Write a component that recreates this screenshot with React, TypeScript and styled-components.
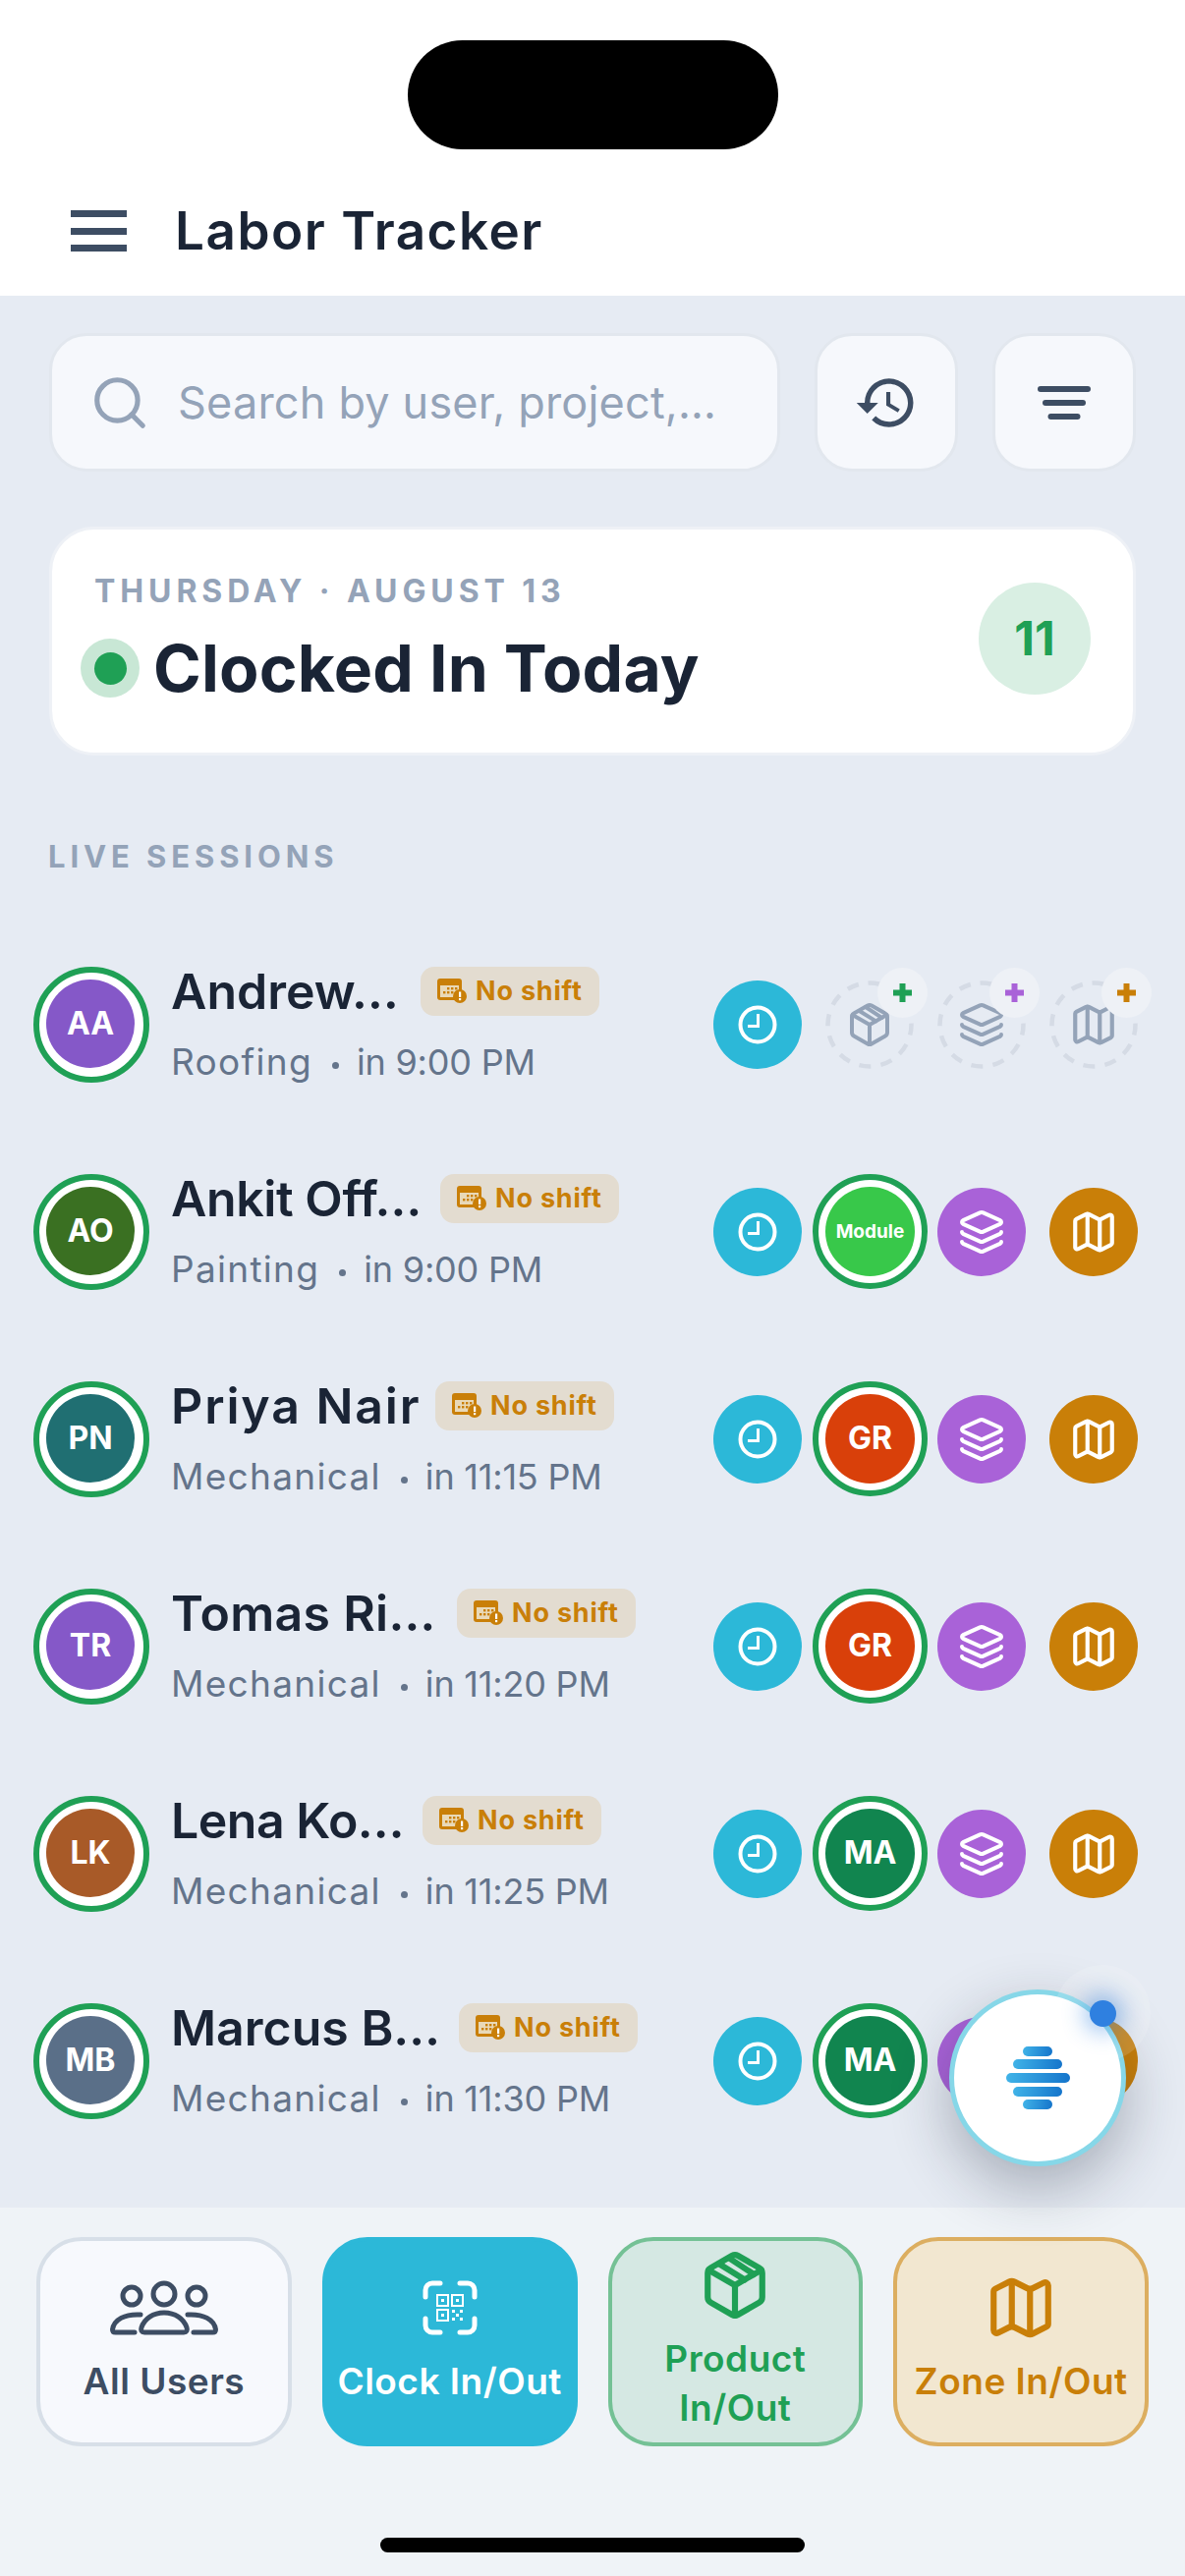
import React from "react";
import styled, { createGlobalStyle } from "styled-components";
import { Search, Layers, Map as MapIcon } from "lucide-react";
import { MdHistory } from "react-icons/md";

const F = `"Inter", "Liberation Sans", sans-serif`;
const GREEN = "#1fa055";
const TEAL = "#2cb8d8";
const PURPLE = "#a962d8";
const AMBER = "#c97f08";
const SLATE = "#3d4d63";
const INK = "#1a2435";

const Global = createGlobalStyle`
  * { box-sizing: border-box; }
  html, body { margin: 0; padding: 0; background: #e6ebf3; font-family: ${F}; }
`;

const Page = styled.div`
  position: relative;
  width: 1206px;
  height: 2622px;
  display: flex;
  flex-direction: column;
  overflow: hidden;
  background: #e6ebf3;
`;

const Header = styled.header`
  height: 301px;
  background: #fff;
  padding-top: 41px;
  display: flex;
  flex-direction: column;
`;

const Notch = styled.div`
  width: 377px;
  height: 111px;
  margin: 0 auto;
  background: #000;
  border-radius: 56px;
`;

const TitleBar = styled.div`
  display: flex;
  align-items: center;
  gap: 49px;
  padding: 56px 0 0 72px;
`;

const Burger = styled.div`
  width: 57px;
  height: 42px;
  display: flex;
  flex-direction: column;
  justify-content: space-between;
  span {
    display: block;
    height: 7px;
    background: ${SLATE};
  }
`;

const AppTitle = styled.h1`
  margin: 0;
  font: 600 53px/54px ${F};
  letter-spacing: 1.5px;
  color: ${INK};
`;

const Main = styled.main`
  flex: 1;
  padding-top: 38px;
  min-height: 0;
`;

const Toolbar = styled.div`
  display: flex;
  gap: 35px;
  padding: 0 50px;
`;

const SearchBox = styled.div`
  flex: 1;
  min-width: 0;
  height: 141px;
  display: flex;
  align-items: center;
  gap: 28px;
  padding-left: 38px;
  background: #f6f8fc;
  border: 3px solid #e2e7ee;
  border-radius: 38px;
  color: #94a3b8;
`;

const SearchInput = styled.input`
  flex: 1;
  min-width: 0;
  border: 0;
  padding: 0;
  outline: 0;
  background: transparent;
  font: 400 45px/56px ${F};
  letter-spacing: 0.2px;
  color: #94a3b8;
  &::placeholder {
    color: #94a3b8;
    opacity: 1;
  }
`;

const ToolButton = styled.button`
  flex: none;
  width: 146px;
  height: 141px;
  padding: 0;
  display: flex;
  align-items: center;
  justify-content: center;
  background: #f6f8fc;
  border: 3px solid #e2e7ee;
  border-radius: 38px;
  color: ${SLATE};
`;

const SummaryCard = styled.section`
  margin: 56px 50px 0;
  height: 233px;
  padding: 43px 43px 0;
  display: flex;
  justify-content: space-between;
  background: #fff;
  border: 3px solid #eef1f6;
  border-radius: 46px;
`;

const DateLine = styled.div`
  font: 700 32px/40px ${F};
  letter-spacing: 4.9px;
  color: #94a3b8;
`;

const SummaryTitle = styled.div`
  display: flex;
  align-items: center;
  gap: 14px;
  margin: 20px 0 0 -14px;
`;

const LiveDot = styled.span`
  width: 60px;
  height: 60px;
  display: flex;
  align-items: center;
  justify-content: center;
  border-radius: 50%;
  background: #c8e7d5;
  &::after {
    content: "";
    width: 33px;
    height: 33px;
    border-radius: 50%;
    background: ${GREEN};
  }
`;

const SummaryHeading = styled.h2`
  margin: 0;
  font: 700 66px/76px ${F};
  letter-spacing: 0.2px;
  color: ${INK};
`;

const CountBubble = styled.div`
  width: 114px;
  height: 114px;
  margin: 11px 0 0;
  display: flex;
  align-items: center;
  justify-content: center;
  border-radius: 50%;
  background: #d9efe3;
  font: 700 48px/1 ${F};
  color: ${GREEN};
`;

const SectionLabel = styled.div`
  margin: 83px 0 45px 49px;
  font: 700 31px/40px ${F};
  letter-spacing: 4.9px;
  color: #94a3b8;
`;

const Row = styled.div`
  height: 211px;
  display: flex;
  align-items: center;
  padding: 0 48px 0 34px;
`;

const AvatarRing = styled.div`
  flex: none;
  width: 118px;
  height: 118px;
  padding: 7px;
  border: 6px solid ${GREEN};
  border-radius: 50%;
  background: #fff;
  margin-right: 22px;
`;

const Avatar = styled.div<{ $bg: string }>`
  width: 90px;
  height: 90px;
  display: flex;
  align-items: center;
  justify-content: center;
  border-radius: 50%;
  background: ${(p) => p.$bg};
  font: 700 32px/1 ${F};
  color: #fff;
`;

const Info = styled.div`
  flex: 1;
  min-width: 0;
  padding-bottom: 4px;
`;

const NameLine = styled.div`
  display: flex;
  align-items: center;
  gap: 20px;
`;

const Name = styled.div<{ $w: number; $ls?: number }>`
  width: ${(p) => p.$w}px;
  font: 600 50px/62px ${F};
  letter-spacing: ${(p) => p.$ls ?? 0}px;
  color: ${INK};
  white-space: nowrap;
`;

const ShiftBadge = styled.div`
  height: 50px;
  display: flex;
  align-items: center;
  gap: 9px;
  padding: 0 17px;
  background: #e3dcd0;
  border-radius: 14px;
  font: 700 27px/1 ${F};
  letter-spacing: 0.8px;
  color: ${AMBER};
  white-space: nowrap;
`;

const SubLine = styled.div`
  display: flex;
  align-items: center;
  margin-top: 18px;
  font: 400 36px/46px ${F};
  letter-spacing: -0.2px;
  color: #64748b;
  white-space: nowrap;
`;

const Trade = styled.span`
  font-size: 37px;
  letter-spacing: 1.3px;
`;

const Sep = styled.span`
  width: 7px;
  height: 7px;
  margin: 8px 18px 0 20px;
  border-radius: 50%;
  background: #64748b;
`;

const Actions = styled.div`
  flex: none;
  display: flex;
  gap: 24px;
`;

const Action = styled.div<{ $bg?: string }>`
  position: relative;
  width: 90px;
  height: 90px;
  display: flex;
  align-items: center;
  justify-content: center;
  border-radius: 50%;
  background: ${(p) => p.$bg ?? "transparent"};
  color: #fff;
`;

const EmptyAction = styled(Action)`
  color: #94a3b8;
`;

const DashRing = styled.svg`
  position: absolute;
  inset: 0;
`;

const PlusBadge = styled.span<{ $c: string }>`
  position: absolute;
  top: -13px;
  right: -14px;
  width: 51px;
  height: 51px;
  display: flex;
  align-items: center;
  justify-content: center;
  border-radius: 50%;
  background: #eef1f6;
  color: ${(p) => p.$c};
`;

const SelectedRing = styled.div<{ $bg: string; $small?: boolean }>`
  position: absolute;
  top: -14px;
  left: -13px;
  width: 117px;
  height: 117px;
  padding: 7px;
  display: flex;
  border: 6px solid ${GREEN};
  border-radius: 50%;
  background: #fff;
  span {
    flex: 1;
    display: flex;
    align-items: center;
    justify-content: center;
    border-radius: 50%;
    background: ${(p) => p.$bg};
    color: #fff;
    font: 700 ${(p) => (p.$small ? "19px" : "32px")}/1 ${F};
  }
`;

const Bottom = styled.footer`
  height: 375px;
  padding: 30px 37px 0;
  background: #eff3f7;
  display: flex;
  flex-direction: column;
`;

const Tabs = styled.div`
  display: grid;
  grid-template-columns: repeat(4, 1fr);
  gap: 31px;
`;

const Tab = styled.button<{ $bg: string; $border: string; $fg: string }>`
  height: 213px;
  padding: 0;
  display: flex;
  flex-direction: column;
  align-items: center;
  justify-content: center;
  gap: 20px;
  background: ${(p) => p.$bg};
  border: 4px solid ${(p) => p.$border};
  border-radius: 46px;
  color: ${(p) => p.$fg};
  font: 600 37px/50px ${F};
  letter-spacing: 0.5px;
  text-align: center;
  white-space: nowrap;
`;

const TwoLineTab = styled(Tab)`
  padding-top: 5px;
`;

const TabIcon = styled.span`
  height: 60px;
  display: flex;
  align-items: center;
  justify-content: center;
`;

const HomeBar = styled.div`
  width: 432px;
  height: 15px;
  margin: 93px auto 0;
  border-radius: 8px;
  background: #000;
`;

const Fab = styled.div`
  position: absolute;
  left: 966px;
  top: 2025px;
  width: 180px;
  height: 180px;
  display: flex;
  flex-direction: column;
  align-items: center;
  justify-content: center;
  gap: 3.7px;
  border-radius: 50%;
  background: #fff;
  border: 5px solid #86d7e8;
  box-shadow: 0 22px 60px rgba(30, 41, 59, 0.32);
`;

const FabBar = styled.span<{ $w: number }>`
  width: ${(p) => p.$w}px;
  height: 10px;
  border-radius: 5px;
  background: linear-gradient(100deg, #41b4e8, #1474cb);
`;

const Halo = styled.div`
  position: absolute;
  left: 1073px;
  top: 2000px;
  width: 98px;
  height: 98px;
  display: flex;
  align-items: center;
  justify-content: center;
  border-radius: 50%;
  background: rgba(255, 255, 255, 0.14);
`;

const Pulse = styled.span`
  width: 27px;
  height: 27px;
  border-radius: 50%;
  background: #2f80e0;
  box-shadow: 0 0 22px 6px rgba(47, 128, 224, 0.45);
`;

const ClockGlyph = () => (
  <svg width="40" height="40" viewBox="0 0 40 40" fill="none" stroke="currentColor">
    <circle cx="20" cy="20" r="17.5" strokeWidth="4" />
    <path d="M20.500 9v12.500H10" strokeWidth="3" />
  </svg>
);

const BoxGlyph = ({ size }: { size: number }) => (
  <svg width={size} height={size} viewBox="0 0 24 24" fill="none" stroke="currentColor" strokeWidth="2" strokeLinecap="round" strokeLinejoin="round">
    <path d="M11 21.730a2 2 0 0 0 2 0l7-4A2 2 0 0 0 21 16V8a2 2 0 0 0-1-1.730l-7-4a2 2 0 0 0-2 0l-7 4A2 2 0 0 0 3 8v8a2 2 0 0 0 1 1.730z" />
    <path d="M12 22V12" />
    <path d="M3.290 7 12 12l8.710-5" />
    <path d="M6.800 5 15.200 10.200" />
    <path d="M10 3 18.200 8.400" />
  </svg>
);

const PlusGlyph = () => (
  <svg width="19" height="19" viewBox="0 0 19 19" fill="currentColor">
    <rect x="6.500" y="0" width="6" height="19" />
    <rect x="0" y="6.500" width="19" height="6" />
  </svg>
);

const FilterGlyph = () => (
  <svg width="54" height="34" viewBox="0 0 54 34" fill="currentColor">
    <rect x="0" y="0" width="54" height="6" rx="3" />
    <rect x="5" y="14" width="44" height="6" rx="3" />
    <rect x="10.500" y="28" width="33" height="6" rx="3" />
  </svg>
);

const ShiftGlyph = () => (
  <svg width="30" height="25" viewBox="0 0 30 25">
    <rect x="0" y="0" width="25" height="22" rx="3" fill={AMBER} />
    <rect x="3" y="7" width="19" height="12" fill="#e9d9b8" />
    <g fill={AMBER}>
      <rect x="10" y="9" width="2.400" height="2.400" />
      <rect x="14" y="9" width="2.400" height="2.400" />
      <rect x="18" y="9" width="2.400" height="2.400" />
      <rect x="6" y="13" width="2.400" height="2.400" />
      <rect x="10" y="13" width="2.400" height="2.400" />
      <rect x="14" y="13" width="2.400" height="2.400" />
    </g>
    <circle cx="23" cy="18" r="7" fill={AMBER} />
    <rect x="22" y="13.500" width="2.200" height="5.500" fill="#fff" />
    <rect x="22" y="20" width="2.200" height="2.200" fill="#fff" />
  </svg>
);

const UsersGlyph = () => (
  <svg width="110" height="58" viewBox="0 0 110 58" fill="none" stroke="currentColor" strokeWidth="5" strokeLinecap="round" strokeLinejoin="round">
    <circle cx="55" cy="15" r="11" />
    <circle cx="22" cy="17" r="9" />
    <circle cx="88" cy="17" r="9" />
    <path d="M35 54c-3 0-4-2-3-5 3-9 12-15 23-15s20 6 23 15c1 3 0 5-3 5z" />
    <path d="M31 36C15 35 4 41 2.500 51c0 2 1 3 3 3H25" />
    <path d="M79 36c16-1 27 5 28.500 15 0 2-1 3-3 3H85" />
  </svg>
);

const QrGlyph = () => (
  <svg width="56" height="56" viewBox="0 0 56 56" fill="none" stroke="currentColor" strokeLinecap="round">
    <g strokeWidth="5">
      <path d="M3 17V10a7 7 0 0 1 7-7h8" />
      <path d="M38 3h8a7 7 0 0 1 7 7v7" />
      <path d="M3 39v7a7 7 0 0 0 7 7h8" />
      <path d="M38 53h8a7 7 0 0 0 7-7v-7" />
    </g>
    <g strokeWidth="2" strokeLinecap="butt">
      <rect x="15" y="15" width="11" height="11" />
      <rect x="30" y="15" width="11" height="11" />
      <rect x="15" y="30" width="11" height="11" />
    </g>
    <g fill="currentColor" stroke="none">
      <rect x="19" y="19" width="3" height="3" />
      <rect x="34" y="19" width="3" height="3" />
      <rect x="19" y="34" width="3" height="3" />
      <rect x="30" y="30" width="3" height="3" />
      <rect x="38" y="30" width="3" height="3" />
      <rect x="34" y="34" width="3" height="3" />
      <rect x="30" y="38" width="3" height="3" />
      <rect x="38" y="38" width="3" height="3" />
    </g>
  </svg>
);

const Dashes = () => (
  <DashRing width="90" height="90" viewBox="0 0 90 90" fill="none">
    <circle cx="45" cy="45" r="42.500" stroke="#d5dbe5" strokeWidth="4.500" strokeDasharray="12 10.250" transform="rotate(-92 45 45)" />
  </DashRing>
);

type Session = {
  initials: string;
  color: string;
  name: string;
  nameWidth: number;
  nameSpacing?: number;
  trade: string;
  time: string;
  module?: { label: string; color: string; small?: boolean };
};

const sessions: Session[] = [
  { initials: "AA", color: "#8558c8", name: "Andrew…", nameWidth: 234, trade: "Roofing", time: "in 9:00 PM" },
  { initials: "AO", color: "#3a7022", name: "Ankit Off…", nameWidth: 254, nameSpacing: -0.4, trade: "Painting", time: "in 9:00 PM", module: { label: "Module", color: "#38c84a", small: true } },
  { initials: "PN", color: "#206f72", name: "Priya Nair", nameWidth: 249, nameSpacing: 1.9, trade: "Mechanical", time: "in 11:15 PM", module: { label: "GR", color: "#d9400a" } },
  { initials: "TR", color: "#8558c8", name: "Tomas Ri…", nameWidth: 271, nameSpacing: 0.3, trade: "Mechanical", time: "in 11:20 PM", module: { label: "GR", color: "#d9400a" } },
  { initials: "LK", color: "#a85a28", name: "Lena Ko…", nameWidth: 236, nameSpacing: -0.5, trade: "Mechanical", time: "in 11:25 PM", module: { label: "MA", color: "#11854f" } },
  { initials: "MB", color: "#5a6f88", name: "Marcus B…", nameWidth: 273, trade: "Mechanical", time: "in 11:30 PM", module: { label: "MA", color: "#11854f" } },
];

const SessionRow = ({ s }: { s: Session }) => (
  <Row>
    <AvatarRing>
      <Avatar $bg={s.color}>{s.initials}</Avatar>
    </AvatarRing>
    <Info>
      <NameLine>
        <Name $w={s.nameWidth} $ls={s.nameSpacing}>{s.name}</Name>
        <ShiftBadge>
          <ShiftGlyph />
          No shift
        </ShiftBadge>
      </NameLine>
      <SubLine>
        <Trade>{s.trade}</Trade>
        <Sep />
        {s.time}
      </SubLine>
    </Info>
    <Actions>
      <Action $bg={TEAL}>
        <ClockGlyph />
      </Action>
      {s.module ? (
        <>
          <Action>
            <SelectedRing $bg={s.module.color} $small={s.module.small}>
              <span>{s.module.label}</span>
            </SelectedRing>
          </Action>
          <Action $bg={PURPLE}>
            <Layers size={48} strokeWidth={2} />
          </Action>
          <Action $bg={AMBER}>
            <MapIcon size={50} strokeWidth={2} />
          </Action>
        </>
      ) : (
        <>
          <EmptyAction>
            <Dashes />
            <BoxGlyph size={48} />
            <PlusBadge $c={GREEN}><PlusGlyph /></PlusBadge>
          </EmptyAction>
          <EmptyAction>
            <Dashes />
            <Layers size={48} strokeWidth={2} />
            <PlusBadge $c={PURPLE}><PlusGlyph /></PlusBadge>
          </EmptyAction>
          <EmptyAction>
            <Dashes />
            <MapIcon size={50} strokeWidth={2} />
            <PlusBadge $c={AMBER}><PlusGlyph /></PlusBadge>
          </EmptyAction>
        </>
      )}
    </Actions>
  </Row>
);

export default function App() {
  return (
    <Page>
      <Global />
      <Header>
        <Notch />
        <TitleBar>
          <Burger>
            <span />
            <span />
            <span />
          </Burger>
          <AppTitle>Labor Tracker</AppTitle>
        </TitleBar>
      </Header>
      <Main>
        <Toolbar>
          <SearchBox>
            <Search size={62} strokeWidth={2} />
            <SearchInput placeholder="Search by user, project,…" readOnly />
          </SearchBox>
          <ToolButton>
            <MdHistory size={66} />
          </ToolButton>
          <ToolButton>
            <FilterGlyph />
          </ToolButton>
        </Toolbar>
        <SummaryCard>
          <div>
            <DateLine>THURSDAY · AUGUST 13</DateLine>
            <SummaryTitle>
              <LiveDot />
              <SummaryHeading>Clocked In Today</SummaryHeading>
            </SummaryTitle>
          </div>
          <CountBubble>11</CountBubble>
        </SummaryCard>
        <SectionLabel>LIVE SESSIONS</SectionLabel>
        {sessions.map((s) => (
          <SessionRow key={s.initials} s={s} />
        ))}
      </Main>
      <Bottom>
        <Tabs>
          <Tab $bg="#f7f9fd" $border="#d7dfe8" $fg={SLATE}>
            <TabIcon><UsersGlyph /></TabIcon>
            All Users
          </Tab>
          <Tab $bg={TEAL} $border={TEAL} $fg="#fff">
            <TabIcon><QrGlyph /></TabIcon>
            Clock In/Out
          </Tab>
          <TwoLineTab $bg="#d5e8e3" $border="#74c195" $fg={GREEN}>
            <TabIcon><BoxGlyph size={74} /></TabIcon>
            <span>Product<br />In/Out</span>
          </TwoLineTab>
          <Tab $bg="#f2e7d0" $border="#dcae60" $fg={AMBER}>
            <TabIcon><MapIcon size={74} strokeWidth={2} /></TabIcon>
            Zone In/Out
          </Tab>
        </Tabs>
        <HomeBar />
      </Bottom>
      <Fab>
        <FabBar $w={30} />
        <FabBar $w={50} />
        <FabBar $w={65} />
        <FabBar $w={50} />
        <FabBar $w={30} />
      </Fab>
      <Halo>
        <Pulse />
      </Halo>
    </Page>
  );
}
